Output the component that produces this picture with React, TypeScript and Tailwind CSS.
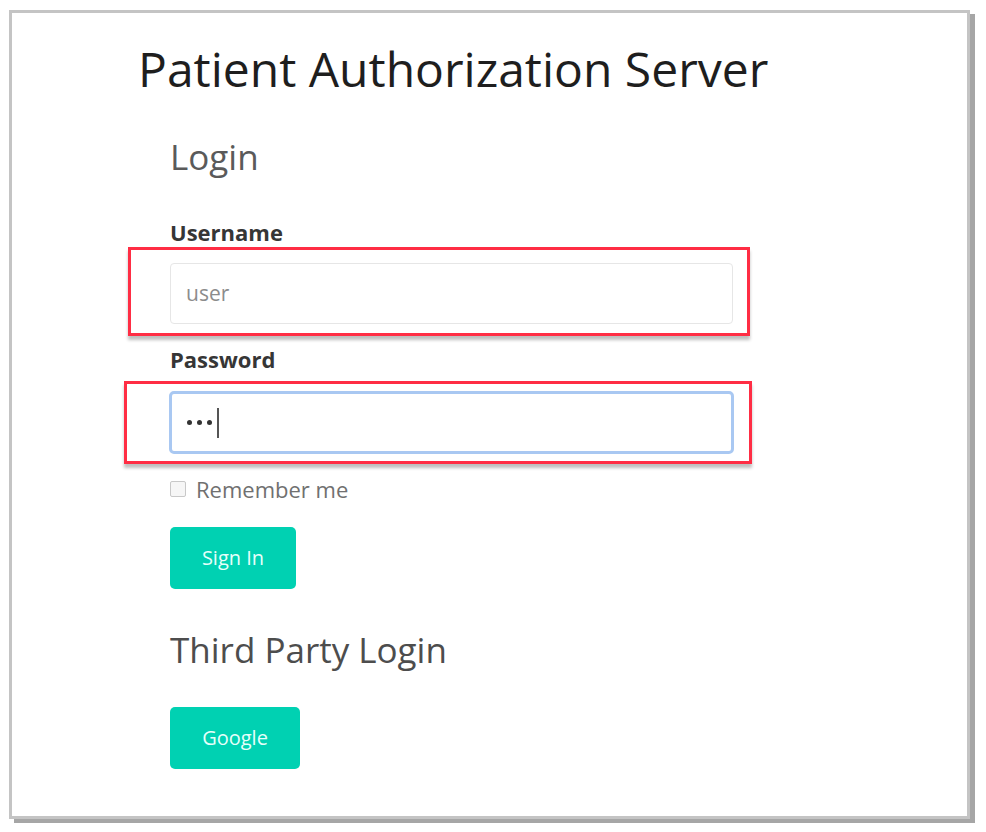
import React from "react";

const font = { fontFamily: '"Open Sans", "Noto Sans", sans-serif' };

function RedBox({ children, className }: { children: React.ReactNode; className: string }) {
  return (
    <div className={`border-[3px] border-[#ff2d44] shadow-[0_4px_3px_rgba(0,0,0,0.25)] ${className}`}>
      {children}
    </div>
  );
}

export default function App() {
  return (
    <div className="w-[986px] h-[832px] bg-white pt-[10px] pl-[9px]" style={font}>
      <div className="w-[961px] h-[809px] bg-white border-[3px] border-[#c4c4c4] shadow-[5px_4px_0_#a6a6a6] pt-[31px] pl-[126px]">
        <h1 className="text-[48px] leading-[49px] text-[#1e1e1e] tracking-[0px]">
          Patient Authorization Server
        </h1>

        <div className="pl-[32px]">
          <h2 className="mt-[46px] text-[35px] leading-[35px] text-[#5a5a5a]">Login</h2>

          <label className="block mt-[47px] text-[22px] leading-[22px] font-bold text-[#363636]">
            Username
          </label>
          <RedBox className="mt-[4px] ml-[-42px] w-[622px] pt-[13px] pb-[9px] pl-[39px] pr-[14px]">
            <div className="h-[61px] border border-[#e6e6e6] rounded-[4px] flex items-center pl-[15px] text-[21px] text-[#8c8c8c]">
              user
            </div>
          </RedBox>

          <label className="block mt-[12px] text-[22px] leading-[22px] font-bold text-[#363636]">
            Password
          </label>
          <RedBox className="mt-[11px] ml-[-46px] w-[628px] pt-[7px] pb-[7px] pl-[42px] pr-[15px]">
            <div className="h-[63px] border-[3px] border-[#a9c8f2] rounded-[5px] flex items-center pl-[15px]">
              <span className="flex gap-[5px] items-center">
                <span className="w-[5px] h-[5px] bg-[#333] rounded-full" />
                <span className="w-[5px] h-[5px] bg-[#333] rounded-full" />
                <span className="w-[5px] h-[5px] bg-[#333] rounded-full" />
              </span>
              <span className="ml-[5px] w-[1.5px] h-[30px] bg-[#555]" />
            </div>
          </RedBox>

          <div className="mt-[14px] flex items-center gap-[10px] h-[22px]">
            <span className="w-[16px] h-[16px] border border-[#c8c8c8] rounded-[2px] bg-[#f6f6f6]" />
            <span className="text-[22px] leading-[22px] text-[#707070]">Remember me</span>
          </div>

          <button className="mt-[27px] w-[126px] h-[62px] bg-[#00d1b2] rounded-[5px] text-[20px] text-[#e6fffa] flex items-center justify-center">
            Sign In
          </button>

          <h2 className="mt-[43px] text-[35px] leading-[35px] text-[#4d4d4d]">Third Party Login</h2>

          <button className="mt-[40px] w-[130px] h-[62px] bg-[#00d1b2] rounded-[5px] text-[20px] text-[#e6fffa] flex items-center justify-center">
            Google
          </button>
        </div>
      </div>
    </div>
  );
}
